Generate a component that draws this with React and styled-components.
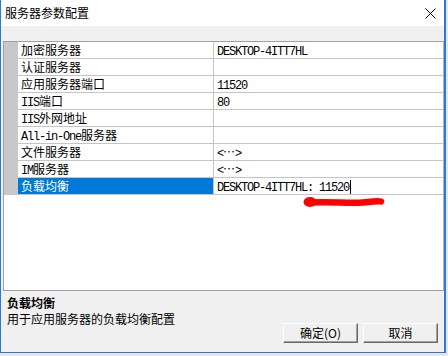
import styled, { createGlobalStyle } from "styled-components";

const GlobalStyle = createGlobalStyle`
  html, body {
    margin: 0;
    padding: 0;
    background: #e6e6e6;
  }
  body {
    font-family: "Noto Sans CJK SC", "Noto Sans", sans-serif;
    font-size: 12px;
    color: #000;
  }
`;

const Window = styled.div`
  position: relative;
  box-sizing: border-box;
  width: 446px;
  height: 353px;
  border: 1px solid #2b79d3;
  border-top: none;
  border-right-width: 2px;
  background: #f0f0f0;
  display: flex;
  flex-direction: column;
`;

const TitleBar = styled.div`
  height: 26px;
  flex: none;
  background: #fff;
  display: flex;
  align-items: center;
  justify-content: space-between;
  padding: 0 8px 0 4px;
`;

const Title = styled.span`
  font-size: 12px;
  line-height: 16px;
`;

const Toolbar = styled.div`
  height: 15px;
  flex: none;
`;

const Grid = styled.div`
  box-sizing: border-box;
  height: 250px;
  flex: none;
  margin-left: 2px;
  background: #fff;
  border: 1px solid #a0a0a0;
  border-right-color: #b4b4b4;
`;

const Row = styled.div`
  display: grid;
  grid-template-columns: 14px 196px 1fr;
  height: 17px;
`;

const Gutter = styled.div`
  background: #c8c8c8;
`;

const Cell = styled.div`
  box-sizing: border-box;
  border-bottom: 1px solid #c4c4c4;
  border-right: ${(p) => (p.$name ? "1px solid #c4c4c4" : "none")};
  padding-left: 3px;
  line-height: 16px;
  white-space: nowrap;
  overflow: hidden;
  background: ${(p) => (p.$selected ? "#0078d7" : "#fff")};
  color: ${(p) => (p.$selected ? "#fff" : "#000")};
`;

const Latin = styled.span`
  font-family: "Liberation Mono", monospace;
  font-size: 12px;
  letter-spacing: -1.2px;
`;

const Caret = styled.span`
  display: inline-block;
  width: 1px;
  height: 14px;
  margin-left: 1px;
  background: #000;
  vertical-align: -3px;
`;

const Help = styled.div`
  flex: 1;
  display: flex;
  justify-content: space-between;
  padding: 4px 6px 9px 6px;
`;

const HelpText = styled.div`
  display: flex;
  flex-direction: column;
  line-height: 16px;
`;

const HelpTitle = styled.span`
  font-weight: bold;
`;

const Buttons = styled.div`
  display: flex;
  gap: 5px;
  align-self: flex-end;
`;

const Button = styled.button`
  box-sizing: border-box;
  width: 75px;
  height: 20px;
  padding: 0;
  font-family: "Noto Sans CJK SC", sans-serif;
  font-size: 12px;
  line-height: 16px;
  background: #f0f0f0;
  color: #000;
  border: 1px solid;
  border-color: #fff #696969 #696969 #fff;
  box-shadow: inset -1px -1px 0 #a0a0a0;
`;

const Scribble = styled.svg`
  position: absolute;
  left: 299px;
  top: 194px;
`;

const rows = [
  { name: "加密服务器", value: "DESKTOP-4ITT7HL" },
  { name: "认证服务器", value: "" },
  { name: "应用服务器端口", value: "11520" },
  { name: [<Latin key="l">IIS</Latin>, "端口"], value: "80" },
  { name: [<Latin key="l">IIS</Latin>, "外网地址"], value: "" },
  { name: [<Latin key="l">All-in-One</Latin>, "服务器"], value: "" },
  { name: "文件服务器", value: "dots" },
  { name: [<Latin key="l">IM</Latin>, "服务器"], value: "dots" },
  { name: "负载均衡", value: "DESKTOP-4ITT7HL: 11520", selected: true },
];

const renderValue = (row) => {
  if (row.value === "dots") {
    return (
      <>
        <Latin>&lt;</Latin>…<Latin>&gt;</Latin>
      </>
    );
  }
  return (
    <>
      <Latin>{row.value}</Latin>
      {row.selected && <Caret />}
    </>
  );
};

const App = () => {
  return (
    <>
      <GlobalStyle />
      <Window lang="zh-CN">
        <TitleBar>
          <Title>服务器参数配置</Title>
          <svg width="11" height="11" viewBox="0 0 11 11">
            <path d="M0.5 0.5 L10.5 10.5 M10.5 0.5 L0.5 10.5" stroke="#000" strokeWidth="1" />
          </svg>
        </TitleBar>
        <Toolbar />
        <Grid>
          {rows.map((row, i) => (
            <Row key={i}>
              <Gutter />
              <Cell $name $selected={row.selected}>
                {row.name}
              </Cell>
              <Cell>{renderValue(row)}</Cell>
            </Row>
          ))}
        </Grid>
        <Help>
          <HelpText>
            <HelpTitle>负载均衡</HelpTitle>
            <span>用于应用服务器的负载均衡配置</span>
          </HelpText>
          <Buttons>
            <Button>确定(O)</Button>
            <Button>取消</Button>
          </Buttons>
        </Help>
        <Scribble width="88" height="16" viewBox="0 0 88 16">
          <ellipse cx="10" cy="8" rx="6.5" ry="5" fill="#ff0000" />
          <path
            d="M9 8.5 C 30 7.5, 50 9.5, 63 8.5 S 78 6.5, 81 7.5"
            stroke="#ff0000"
            strokeWidth="6.5"
            strokeLinecap="round"
            fill="none"
          />
        </Scribble>
      </Window>
    </>
  );
};

export default App;
